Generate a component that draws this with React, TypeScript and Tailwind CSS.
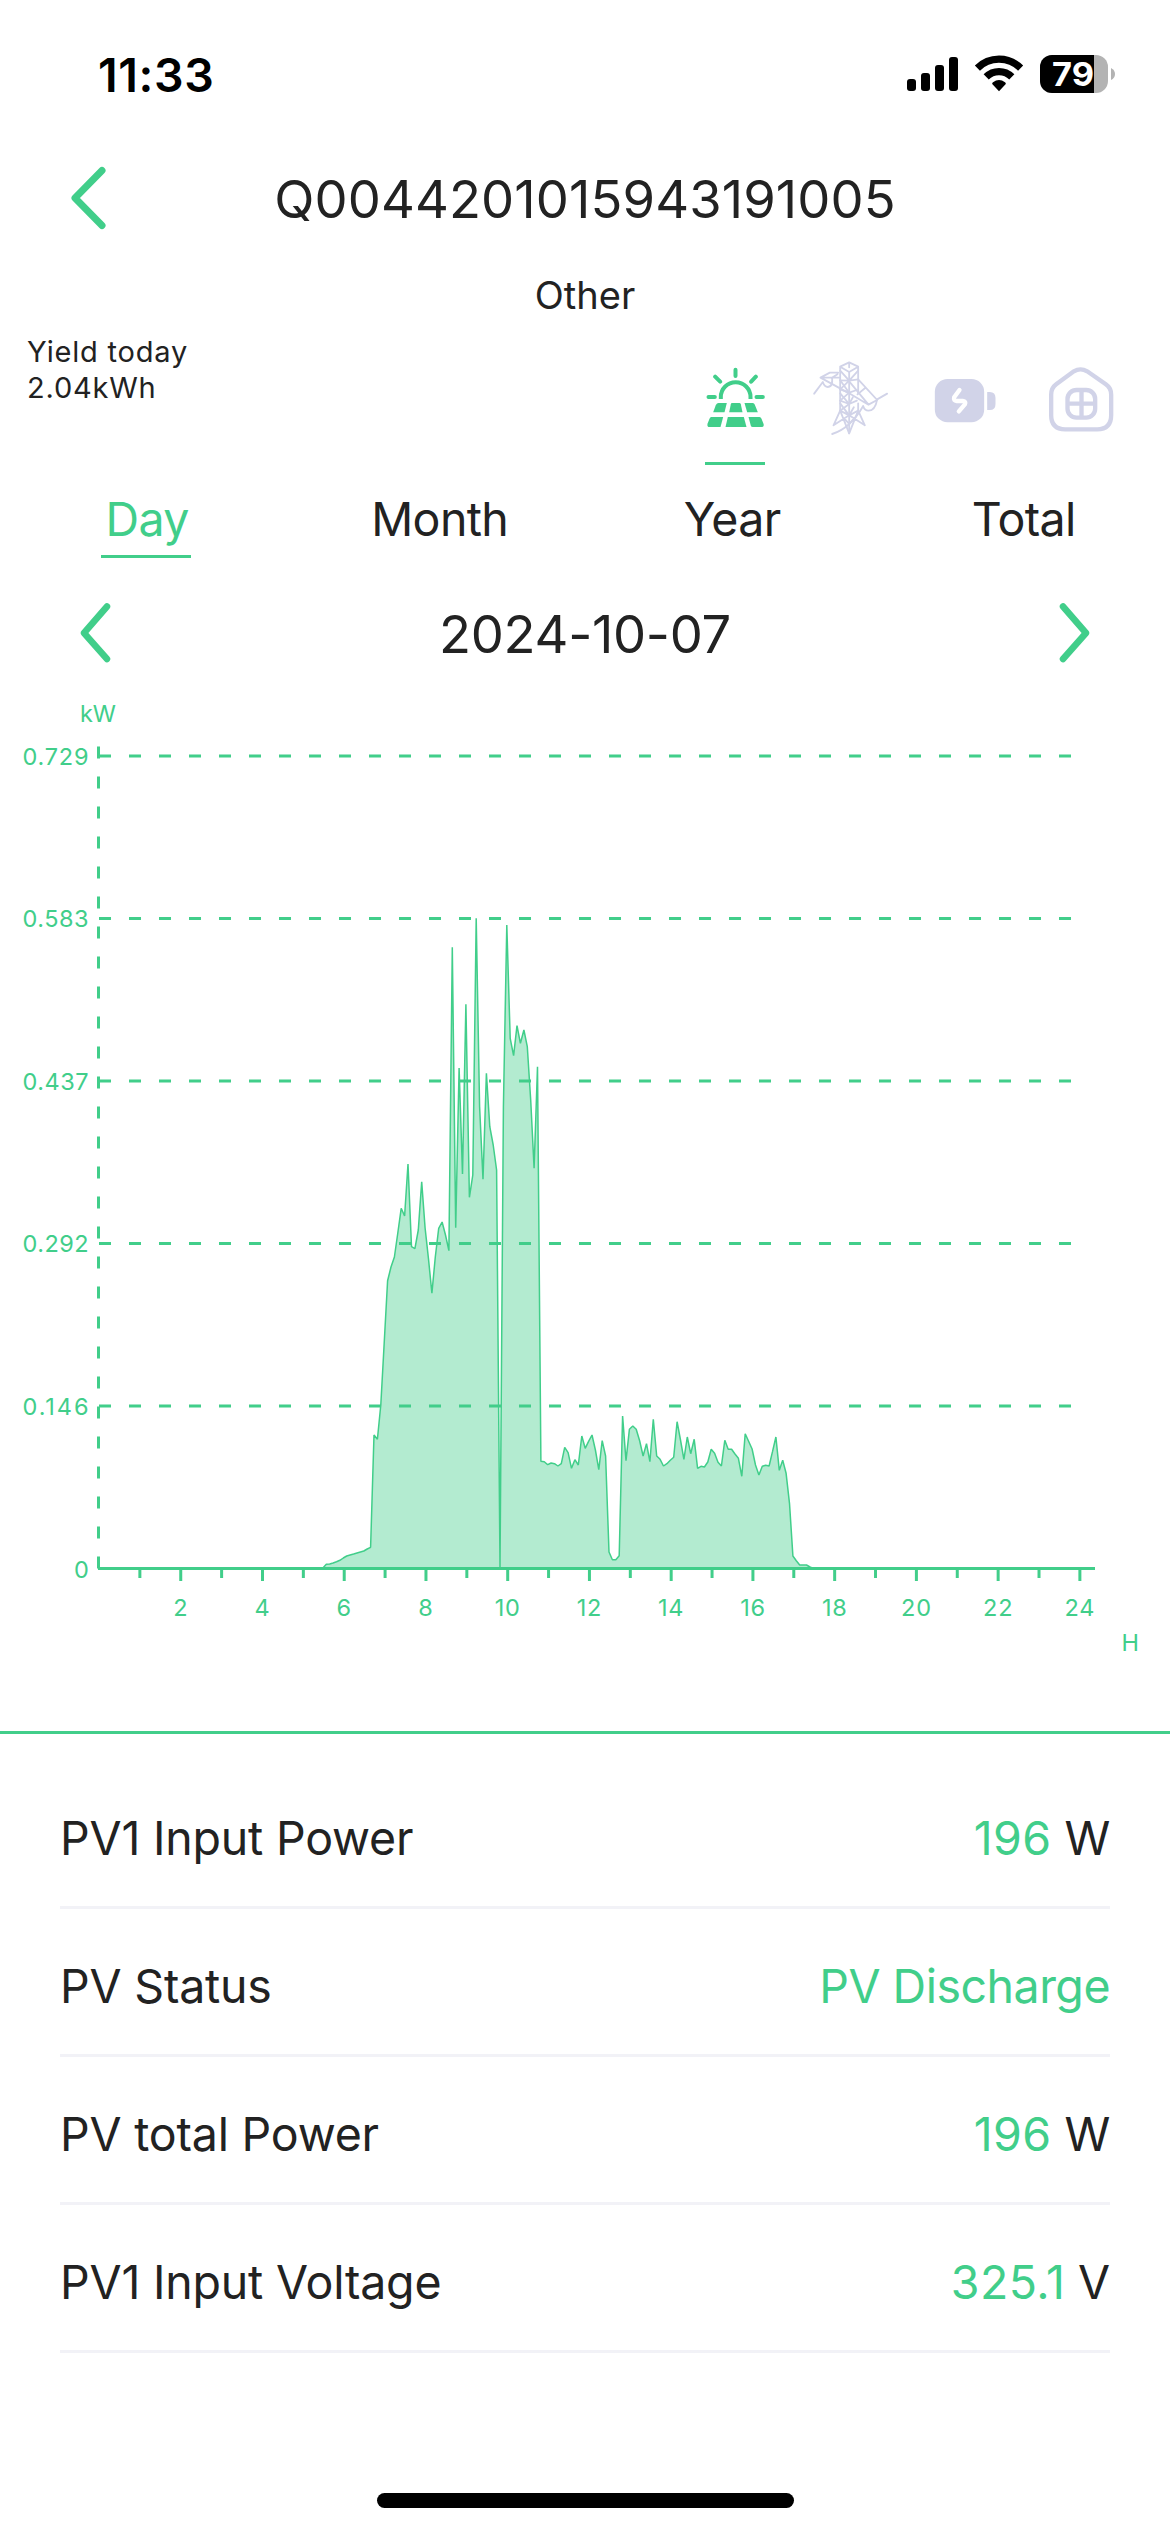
import type { ReactNode } from "react";

const GREEN = "#41ce8a";
const MUTED = "#d1d3e8";

// chart geometry
const LEFT = 99;
const BASE = 1568.5;
const HOUR = 40.87;
const STEP = 3.406;
const FIRST = 66;

// one sample every five minutes, from 5:30 on
const samples = [
  1568, 1564.2, 1564, 1563, 1561.7, 1560.3, 1558, 1556, 1555, 1554, 1553, 1552,
  1551, 1549, 1547.3, 1435, 1439.3, 1405, 1343, 1280.7, 1267, 1257, 1233,
  1208.3, 1216, 1164, 1246.7, 1248.7, 1230, 1181.7, 1228, 1259, 1293.3, 1257,
  1228.3, 1222, 1235, 1250.7, 947.3, 1227.7, 1068, 1174, 1004.3, 1197.3, 1175,
  918.3, 1106.7, 1179.3, 1073.3, 1126.7, 1145, 1170, 1567.5, 1107, 925, 1038.3,
  1055.7, 1025.7, 1043.3, 1030, 1046.7, 1100, 1168.3, 1066.7, 1461.3, 1461.7,
  1464.7, 1463, 1463.7, 1466, 1463.7, 1447.3, 1452.7, 1468.3, 1459.7, 1465,
  1436, 1448.3, 1441.3, 1435, 1450, 1469.7, 1440.7, 1456, 1552, 1559.7, 1559.7,
  1555.7, 1416, 1460.7, 1429.3, 1426, 1429.3, 1441, 1456, 1443.7, 1461.7,
  1419.3, 1456, 1459.3, 1466, 1463.7, 1460.3, 1457.3, 1421.7, 1440, 1459.3,
  1437, 1453.7, 1439.3, 1468.3, 1466.3, 1467, 1462, 1449.3, 1453.3, 1462.3,
  1466, 1440.3, 1449.3, 1449.3, 1454, 1458.3, 1476.3, 1433.7, 1441.3, 1449,
  1465, 1475, 1466.3, 1465.3, 1466, 1451.7, 1437, 1470.3, 1460.3, 1473.3,
  1503.3, 1556, 1560.7, 1565, 1565, 1565, 1567, 1568.5,
];

const line = samples
  .map((y, i) => `${(98.1 + (FIRST + i) * STEP).toFixed(1)},${y}`)
  .join(" L");

const yTicks = [
  { label: "0.729", y: 756 },
  { label: "0.583", y: 918.5 },
  { label: "0.437", y: 1081 },
  { label: "0.292", y: 1243.5 },
  { label: "0.146", y: 1406 },
];

const hours = Array.from({ length: 24 }, (_, i) => i + 1);

const rows = [
  { name: "PV1 Input Power", value: "196", unit: "W" },
  { name: "PV Status", value: "PV Discharge", unit: "" },
  { name: "PV total Power", value: "196", unit: "W" },
  { name: "PV1 Input Voltage", value: "325.1", unit: "V" },
];

const StatusBar = () => {
  return (
    <div className="flex h-[142px] items-start justify-between pl-[98px] pr-[54px] pt-[55px]">
      <span className="text-[46.5px] font-semibold leading-[40px] tracking-[0.6px] text-black">
        11:33
      </span>
      <svg width="210" height="40" viewBox="906 55 210 40">
        <rect x="907" y="79" width="9" height="12" rx="3" />
        <rect x="921" y="73" width="9" height="18" rx="3" />
        <rect x="935" y="65" width="9" height="26" rx="3" />
        <rect x="949" y="57" width="9" height="34" rx="3" />
        <g fill="none" stroke="#000" strokeWidth="7.2">
          <path d="M977.4 68.1 A30.5 30.5 0 0 1 1020.6 68.1" />
          <path d="M986.2 76.9 A18 18 0 0 1 1011.8 76.9" />
        </g>
        <path d="M999 91.2 L992.2 84 Q992 83 993 82.3 A10 10 0 0 1 1005 82.3 Q1006 83 1005.8 84 Z" />
        <clipPath id="cell">
          <rect x="1040" y="55" width="68" height="38" rx="12" />
        </clipPath>
        <g clipPath="url(#cell)">
          <rect x="1040" y="55" width="68" height="38" fill="#b3b3b3" />
          <rect x="1040" y="55" width="54" height="38" />
        </g>
        <path d="M1111 68 Q1115 70 1115 74 T1111 80 Z" fill="#b3b3b3" />
        <text
          x="1052"
          y="86"
          fill="#fff"
          fontSize="33"
          fontWeight="700"
          textLength="42"
          lengthAdjust="spacingAndGlyphs"
        >
          79
        </text>
      </svg>
    </div>
  );
};

const Chevron = ({
  d,
  box,
  weight = 7,
}: {
  d: string;
  box: string;
  weight?: number;
}) => {
  return (
    <svg
      width="40"
      height="66"
      viewBox={box}
      fill="none"
      stroke={GREEN}
      strokeWidth={weight}
      strokeLinecap="round"
      strokeLinejoin="round"
    >
      <path d={d} />
    </svg>
  );
};

const SourceTab = ({
  box,
  active,
  children,
}: {
  box: string;
  active?: boolean;
  children: ReactNode;
}) => {
  return (
    <div className="flex w-[115px] flex-col items-center">
      <svg width="115" height="112" viewBox={box}>
        {children}
      </svg>
      {active && <div className="h-[3px] w-[60px] bg-[#41ce8a]" />}
    </div>
  );
};

const Sources = () => {
  return (
    <div className="flex pt-4">
      {/* solar */}
      <SourceTab box="-37.5 0 345 336" active>
        <g fill="none" stroke={GREEN} strokeWidth="12">
          <path d="M91 147 V141 A44 44 0 0 1 180 141 V147" />
          <path
            d="M135 59 V78 M74 80 L89 95 M196 80 L182 95 M54 141 H73 M198 141 H217"
            strokeLinecap="round"
          />
        </g>
        <g fill={GREEN}>
          <path d="M84 159 H109 L102 187 H68 L76 165 Q79 159 84 159 Z" />
          <path d="M124 159 H147 Q150 159 151 163 L156 187 H116 L121 163 Q122 159 124 159 Z" />
          <path d="M162 159 H187 Q191 159 193 164 L202 187 H170 Z" />
          <path d="M62 201 H98 L90 231 H57 Q49 231 51 221 L57 206 Q59 201 62 201 Z" />
          <path d="M112 201 H160 L168 231 H105 Z" />
          <path d="M174 201 H207 Q211 201 213 206 L219 221 Q222 231 213 231 H187 Q182 231 181 227 Z" />
        </g>
      </SourceTab>
      {/* grid */}
      <SourceTab box="307.5 0 345 336">
        <g
          fill="none"
          stroke={MUTED}
          strokeWidth="5.5"
          strokeLinecap="round"
          strokeLinejoin="round"
        >
          <path d="M449 182 V50 L476 37 L503 50 V130 M503 160 V182 M449 50 L476 66 L503 50 M476 37 V52 M476 66 V250" />
          <path d="M449 62 L476 92 L503 62 M449 91 L476 92 L503 88 M449 118 L476 92" />
          <path d="M449 91 L476 128 M449 118 L476 128 L499 120 M449 152 L476 128" />
          <path d="M449 130 L476 162 L487 142 M449 152 L476 162 L499 152 M449 182 L476 162" />
          <path d="M449 160 L476 196 L503 182 M449 182 L476 196 L490 172" />
          <path d="M449 182 L429 226 L476 196 L523 226 L503 182 M449 182 L476 250 L503 182 M462 206 L476 222 L490 206" />
          <path d="M443 68 H418 L390 83 H449 M390 83 L476 130 L534 164 L560 150 L503 88 M476 94 L534 164 M423 84 L441 73 M425 86 V96 M501 133 L524 114" />
          <path d="M371 131 L397 96 Q402 111 412 111 Q423 110 425 96 M590 131 L560 148 Q554 182 534 182 Q522 182 518 168 Q480 235 425 252" />
        </g>
      </SourceTab>
      {/* battery */}
      <SourceTab box="-7.5 0 345 336">
        <rect x="73" y="87" width="148" height="130" rx="38" fill={MUTED} />
        <path
          d="M230 126 H238 Q255 126 255 144 V162 Q255 180 238 180 H230 Z"
          fill={MUTED}
        />
        <path
          d="M147 120 L131 142 Q128 152 139 153 H157 Q168 154 163 163 L145 184"
          fill="none"
          stroke="#fff"
          strokeWidth="13"
          strokeLinecap="round"
          strokeLinejoin="round"
        />
      </SourceTab>
      {/* home */}
      <SourceTab box="337.5 0 345 336">
        <g fill="none" stroke={MUTED} strokeWidth="13">
          <path d="M437 103 L490 64 Q510 52 530 64 L586 103 Q602 114 602 134 V196 Q602 238 560 238 H464 Q422 238 422 196 V134 Q422 114 437 103 Z" />
          <rect x="471" y="120" width="83" height="83" rx="27" />
          <path d="M513 120 V203 M471 161 H554" />
        </g>
      </SourceTab>
    </div>
  );
};

const Chart = () => {
  return (
    <svg
      width="1170"
      height="1039"
      viewBox="0 692 1170 1039"
      fill={GREEN}
      fontSize="23.5"
    >
      <g fill="none" stroke={GREEN} strokeWidth="3">
        {yTicks.map((t) => (
          <path key={t.label} d={`M${LEFT} ${t.y} H1071`} strokeDasharray="12 18" />
        ))}
        <path d={`M98.5 ${BASE} V746`} strokeDasharray="12 18" />
      </g>
      <path
        d={`M${line} Z`}
        fill={GREEN}
        fillOpacity="0.4"
        stroke={GREEN}
        strokeWidth="1.5"
        strokeLinejoin="bevel"
      />
      <g fill="none" stroke={GREEN} strokeWidth="3">
        <path d={`M98 ${BASE} H1095`} />
        {hours.map((h) => (
          <path
            key={h}
            d={`M${LEFT + h * HOUR} ${BASE} V${h % 2 ? 1578 : 1581}`}
          />
        ))}
      </g>
      <text x="80" y="722" textLength="36">
        kW
      </text>
      {yTicks.map((t) => (
        <text key={t.label} x="22.5" y={t.y + 8.7} textLength="66">
          {t.label}
        </text>
      ))}
      <text x="74" y="1577.5">
        0
      </text>
      {hours
        .filter((h) => h % 2 === 0)
        .map((h) => (
          <text
            key={h}
            x={LEFT + h * HOUR}
            y="1616"
            textAnchor="middle"
            letterSpacing="0.7"
          >
            {h}
          </text>
        ))}
      <text x="1121.5" y="1651">
        H
      </text>
    </svg>
  );
};

const App = () => {
  return (
    <div className="flex h-[2532px] w-[1170px] flex-col bg-white font-['Inter',sans-serif] text-[#222222]">
      <StatusBar />

      {/* header */}
      <div className="flex h-[114px] items-center justify-between px-[68px]">
        <Chevron box="68 166 40 66" d="M102 170.5 L75 198 L102 225.5" />
        <h1 className="text-[52.5px] tracking-[0.1px]">Q0044201015943191005</h1>
        <div className="w-[40px]" />
      </div>
      <p className="flex h-[78px] items-center justify-center text-[38px]">
        Other
      </p>

      {/* yield and energy sources */}
      <div className="flex h-[131px] justify-between pl-[27px] pr-[32.5px]">
        <div className="text-[29px] leading-[36px] tracking-[0.8px]">
          <p>Yield today</p>
          <p>2.04kWh</p>
        </div>
        <Sources />
      </div>

      {/* period */}
      <div className="mt-[18px] grid grid-cols-4 justify-items-center text-[46.5px] leading-[72px] tracking-[-0.6px]">
        <div className="flex w-[90px] justify-center border-b-[3px] border-[#41ce8a] pl-0.5 text-[#41ce8a]">
          Day
        </div>
        <div className="pl-0.5">Month</div>
        <div className="pl-0.5">Year</div>
        <div>Total</div>
      </div>
      <div className="mt-[18px] flex h-[116px] items-center justify-between px-[76px]">
        <Chevron box="76 601 40 66" d="M107 606.5 L84 633 L107 659" weight={6.5} />
        <span className="text-[52.5px] tracking-[-0.3px]">2024-10-07</span>
        <Chevron box="1054 601 40 66" d="M1063 606.5 L1086 633 L1063 659" weight={6.5} />
      </div>

      <Chart />
      <div className="h-[3px] bg-[#41ce8a]" />

      {/* readings */}
      <div className="px-[60px] pt-[27px] text-[46.5px] tracking-[-0.2px]">
        {rows.map((r) => (
          <div
            key={r.name}
            className="flex h-[148px] items-center justify-between border-b-[3px] border-[#f2f2f7] pt-2.5"
          >
            <span>{r.name}</span>
            {r.unit ? (
              <span>
                <span className="tracking-[0.4px] text-[#41ce8a]">{r.value}</span>{" "}
                {r.unit}
              </span>
            ) : (
              <span className="tracking-[-0.5px] text-[#41ce8a]">{r.value}</span>
            )}
          </div>
        ))}
      </div>

      <div className="mx-auto mt-[140px] h-[15px] w-[417px] rounded-full bg-black" />
    </div>
  );
};

export default App;
